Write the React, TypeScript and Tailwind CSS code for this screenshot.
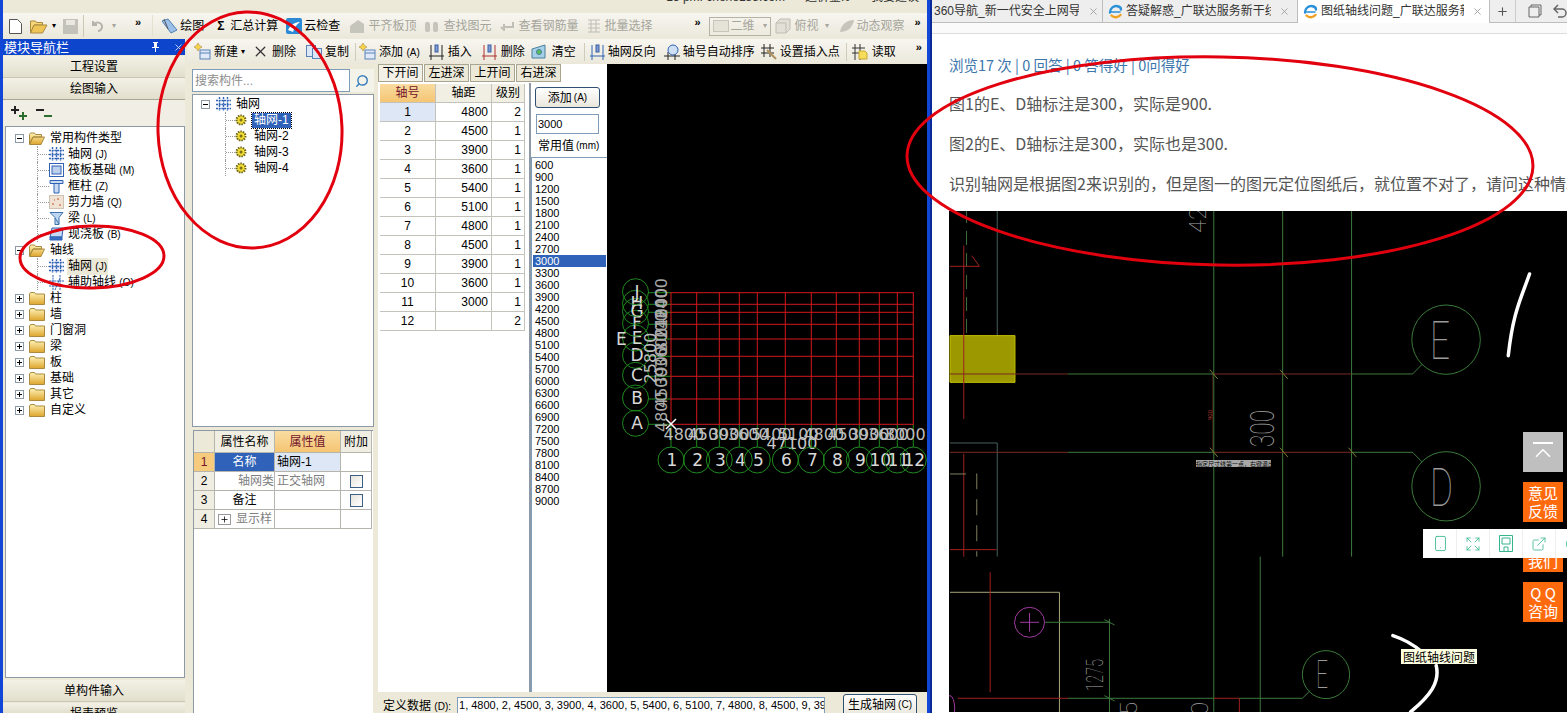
import React from "react";
import { Smartphone, Expand, ExternalLink, CircleDot, Plus, X, Search, ChevronUp } from "lucide-react";

const GridIcon = () => (
  <svg width="15" height="14" viewBox="0 0 15 14" className="shrink-0" stroke="#2f62b5" fill="none">
    <path d="M3.5 0v14M7.5 0v14M11.5 0v14M0 3.5h15M0 7.5h15M0 11.5h15" strokeWidth="1.4" strokeDasharray="2 .7" />
  </svg>
);

const PlateIcon = () => (
  <svg width="15" height="14" viewBox="0 0 15 14" className="shrink-0" fill="none" stroke="#2f62b5">
    <rect x=".5" y=".5" width="14" height="13" strokeWidth="1" />
    <rect x="3" y="3" width="9" height="8" fill="#bcd0ee" />
  </svg>
);

const ColumnIcon = () => (
  <svg width="15" height="15" viewBox="0 0 15 15" className="shrink-0" fill="#c9d9f2" stroke="#2f62b5">
    <path d="M1 1.5h13v3H1zM5 4.5h5V14H5z" />
  </svg>
);

const WallIcon = () => (
  <svg width="15" height="14" viewBox="0 0 15 14" className="shrink-0">
    <rect x=".5" y=".5" width="14" height="13" fill="#f1e3d3" stroke="#a8957f" strokeDasharray="1 1" />
    <path d="M3 9h2M8 4h2M10 10h2M5 5h1" stroke="#c0502a" />
  </svg>
);

const BeamIcon = () => (
  <svg width="15" height="15" viewBox="0 0 15 15" className="shrink-0" fill="#bcd7ef" stroke="#3d72ad">
    <path d="M1 1.5h13l-4 5v7H6v-7z" />
    <path d="M6 7l4 6" />
  </svg>
);

const SlabIcon = () => (
  <svg width="15" height="14" viewBox="0 0 15 14" className="shrink-0" fill="#c6d8f3" stroke="#2f62b5">
    <path d="M3 1h11l-1 9H1z" />
    <path d="M1 10h12v3H1z" fill="#3b6fc4" />
  </svg>
);

const AuxIcon = () => (
  <svg width="15" height="15" viewBox="0 0 15 15" className="shrink-0" stroke="#2f62b5" fill="none">
    <path d="M4 0v15M11 0v15M0 6h15M0 11h15M6 15L11 3" strokeDasharray="2 .6" />
  </svg>
);

const FolderIcon = ({ open }: { open?: boolean }) => (
  <svg width="16" height="13" viewBox="0 0 16 13" className="shrink-0">
    <defs>
      <linearGradient id="fold" x1="0" y1="0" x2="0" y2="1">
        <stop offset="0" stopColor="#fff3b8" />
        <stop offset="1" stopColor="#dda52c" />
      </linearGradient>
    </defs>
    {open ? (
      <path d="M.5 12V2.5l1-1.5h4l1 1.500h6V5H4L.5 12zm0 .5h11.500L15.500 5H4z" fill="url(#fold)" stroke="#a98a3e" />
    ) : (
      <path d="M.5 12.500V2l1-1.500h4l1 1.500h9v10.500z" fill="url(#fold)" stroke="#a98a3e" />
    )}
  </svg>
);

const Expander = ({ open }: { open?: boolean }) => (
  <span className="w-[9px] h-[9px] border border-[#8c9aa8] bg-white flex items-center justify-center shrink-0 relative">
    <span className="w-[5px] h-px bg-black" />
    {!open && <span className="absolute w-px h-[5px] bg-black" />}
  </span>
);

const NewIcon = () => (
  <svg width="17" height="17" viewBox="0 0 17 17" className="shrink-0">
    <rect x="6" y="7" width="10" height="9" fill="#dfe9f8" stroke="#5b82b8" />
    <path d="M6 10h10" stroke="#5b82b8" />
    <path d="M4 0l1.500 2.500L8 4 5.500 5.500 4 8 2.500 5.500 0 4l2.500-1.500z" fill="#f5d44b" stroke="#a98a3e" strokeWidth=".6" />
  </svg>
);

const AxisIcon = ({ color = "#222" }: { color?: string }) => (
  <svg width="15" height="16" viewBox="0 0 15 16" className="shrink-0" stroke={color} fill="none">
    <path d="M2 1v15M13 1v15M0 12h15" />
    <rect x="6" y="1" width="3" height="7" fill="#7e9bd3" stroke="#3b5ea5" />
  </svg>
);

// the blue and orange swirl on the browser tabs
const TabLogo = () => (
  <svg width="15" height="15" viewBox="0 0 15 15" className="shrink-0" fill="none" strokeWidth="2.400" strokeLinecap="round">
    <path d="M2 8.500C2 4 6 1.500 9.500 2.200c2 .4 3.500 1.800 3.500 3.300" stroke="#2a90d8" />
    <path d="M3 8h9" stroke="#2a90d8" strokeWidth="1.500" />
    <path d="M3.500 11.500c2.500 2.500 6.500 2.200 9-.5" stroke="#f0a020" />
  </svg>
);

const Dim = ({ children }: { children: React.ReactNode }) => <span className="text-[#a6a59c]">{children}</span>;

const Chevrons = ({ className }: { className: string }) => (
  <span className={"text-[11px] font-bold leading-none -mt-2 " + className}>»</span>
);

const LeafRow = ({ icon, label, hot, active }: { icon: React.ReactNode; label: string; hot: string; active?: boolean }) => (
  <div className="h-4 flex items-center">
    <span className="w-3 h-full border-l border-dotted border-[#9a9a9a] flex items-center">
      <span className="w-full border-t border-dotted border-[#9a9a9a]" />
    </span>
    {icon}
    <span className={"ml-[3px] px-px leading-4 " + (active ? "bg-[#ece9d8]" : "")}>
      {label} <span className="text-[10px]">{hot}</span>
    </span>
  </div>
);

const FolderRow = ({ label, open }: { label: string; open?: boolean }) => (
  <div className="h-4 flex items-center pl-[9px]">
    <Expander open={open} />
    <span className="w-[5px]" />
    <FolderIcon open={open} />
    <span className="ml-[5px]">{label}</span>
  </div>
);

const ModuleNav = () => (
  <div className="w-[184px] shrink-0 flex flex-col pr-[2px]">
    <div className="h-[16px] bg-[#0e45cd] text-white flex items-center leading-none pl-px">
      <span className="text-[13px]">模块导航栏</span>
      <svg width="9" height="10" viewBox="0 0 9 10" className="ml-auto mr-[13px]" fill="#fff">
        <path d="M2 0h5v1H6v4h2v1H5v4H4V6H1V5h2V1H2z" />
      </svg>
      <X size={11} className="mr-[1px] text-[#c8d6f5]" />
    </div>
    <div className="h-[22px] mt-px bg-gradient-to-b from-[#f3f1e6] to-[#e2dfcd] border-b border-[#c9c6b4] flex items-center justify-center text-[12px]">工程设置</div>
    <div className="h-[22px] bg-gradient-to-b from-[#f3f1e6] to-[#e2dfcd] border-b border-[#a9a695] flex items-center justify-center text-[12px]">绘图输入</div>
    <div className="h-[26px] pl-[7px] flex items-center gap-[9px] bg-[#f1efe5]">
      <svg width="17" height="14" viewBox="0 0 17 14" stroke="#2c6c2c" fill="none" strokeWidth="2">
        <path d="M1 4h8M5 0v8" stroke="#222" />
        <path d="M9 10h8M13 6v8" />
      </svg>
      <svg width="17" height="12" viewBox="0 0 17 12" fill="none" strokeWidth="2">
        <path d="M0 3h8" stroke="#222" />
        <path d="M8 9h8" stroke="#2c6c2c" />
      </svg>
    </div>
    <div className="flex-1 ml-[2px] bg-white border border-[#8d9aa6] pt-[3px] text-[12px] text-black overflow-hidden">
      <FolderRow label="常用构件类型" open />
      <div className="ml-[31px]">
        <LeafRow icon={<GridIcon />} label="轴网" hot="(J)" />
        <LeafRow icon={<PlateIcon />} label="筏板基础" hot="(M)" />
        <LeafRow icon={<ColumnIcon />} label="框柱" hot="(Z)" />
        <LeafRow icon={<WallIcon />} label="剪力墙" hot="(Q)" />
        <LeafRow icon={<BeamIcon />} label="梁" hot="(L)" />
        <LeafRow icon={<SlabIcon />} label="现浇板" hot="(B)" />
      </div>
      <FolderRow label="轴线" open />
      <div className="ml-[31px]">
        <LeafRow icon={<GridIcon />} label="轴网" hot="(J)" active />
        <LeafRow icon={<AuxIcon />} label="辅助轴线" hot="(O)" />
      </div>
      {["柱", "墙", "门窗洞", "梁", "板", "基础", "其它", "自定义"].map((f) => (
        <FolderRow key={f} label={f} />
      ))}
    </div>
    <div className="h-[22px] mt-[2px] bg-gradient-to-b from-[#f3f1e6] to-[#e2dfcd] border-b border-[#c9c6b4] flex items-center justify-center text-[12px]">单构件输入</div>
    <div className="h-[10px] mt-[1px] bg-gradient-to-b from-[#f3f1e6] to-[#e2dfcd] flex justify-center text-[12px] leading-[22px]">报表预览</div>
  </div>
);

const Dot = () => (
  <svg width="12" height="12" viewBox="0 0 12 12" className="shrink-0">
    <circle cx="6" cy="6" r="4.500" fill="#f1dd33" stroke="#6f6420" strokeDasharray="1.500 1" strokeWidth="2" />
    <circle cx="6" cy="6" r="1.500" fill="#7a6d1f" />
  </svg>
);

const ComponentList = () => (
  <div className="h-[333px] mt-[2px] bg-white border border-[#8d9aa6] pt-[1px] pl-2 text-[12px] overflow-hidden">
    <div className="h-4 flex items-center">
      <Expander open />
      <span className="w-[6px]" />
      <GridIcon />
      <span className="ml-[5px]">轴网</span>
    </div>
    <div className="ml-[24px]">
      {["轴网-1", "轴网-2", "轴网-3", "轴网-4"].map((n, i) => (
        <div key={n} className="h-4 flex items-center">
          <span className="w-[10px] h-full border-l border-dotted border-[#9a9a9a] flex items-center">
            <span className="w-full border-t border-dotted border-[#9a9a9a]" />
          </span>
          <Dot />
          <span className={"ml-[5px] px-[2px] leading-[15px] " + (i === 0 ? "bg-[#2f62b8] text-white outline-1 outline-dotted outline-black" : "")}>{n}</span>
        </div>
      ))}
    </div>
  </div>
);

const PropertyTable = () => {
  const cell = "border-r border-b border-[#b5b5ae] flex items-center text-[12px]";
  const rows = [
    { n: "1", name: "名称", value: "轴网-1", check: false },
    { n: "2", name: "轴网类", value: "正交轴网", check: true },
    { n: "3", name: "备注", value: "", check: true },
    { n: "4", name: "显示样", value: "", check: false },
  ];
  return (
    <div className="ml-[1px] mt-[3px] flex-1 bg-white border-t border-l border-[#8d9aa6] w-[180px] grid grid-cols-[21px_60px_66px_31px] grid-rows-[22px_19px_19px_19px_19px] content-start">
      <div className={cell + " bg-[#ece9d8]"} />
      <div className={cell + " bg-[#f0eee2] justify-center"}>属性名称</div>
      <div className={cell + " bg-gradient-to-b from-[#f9dca0] to-[#f5c573] justify-center text-[#72122a]"}>属性值</div>
      <div className={cell + " bg-[#f0eee2] justify-center"}>附加</div>
      {rows.map((r, i) => (
        <React.Fragment key={r.n}>
          <div className={cell + " justify-center text-[11px] " + (i === 0 ? "bg-[#f7cb7e] text-[#72122a]" : "bg-[#f0eee2]")}>{r.n}</div>
          {i === 3 ? (
            <div className={cell + " text-[#808080] pl-[3px]"}>
              <span className="w-[13px] h-[11px] border border-[#999] flex items-center justify-center text-black mr-[5px]">
                <Plus size={9} />
              </span>
              {r.name}
            </div>
          ) : (
            <div className={cell + " justify-center " + (i === 0 ? "bg-[#2f62b8] text-white" : i === 1 ? "text-[#808080] justify-end" : "")}>{r.name}</div>
          )}
          <div className={cell + " pl-[2px] " + (i === 0 ? "bg-[#dde7f5]" : "") + (i === 1 ? " text-[#808080]" : "")}>{r.value}</div>
          <div className={cell + " justify-center"}>
            {r.check && <span className="w-[13px] h-[13px] border border-[#3d5f86] bg-gradient-to-br from-[#e6e4dc] to-white" />}
          </div>
        </React.Fragment>
      ))}
    </div>
  );
};

const gridRows = [
  [1, 4800, 2], [2, 4500, 1], [3, 3900, 1], [4, 3600, 1], [5, 5400, 1], [6, 5100, 1],
  [7, 4800, 1], [8, 4500, 1], [9, 3900, 1], [10, 3600, 1], [11, 3000, 1], [12, "", 2],
];

const AxisTable = () => {
  const c = "border-r border-b border-[#c3c3bc] flex items-center text-[12px]";
  return (
    <div className="w-[153px] shrink-0 bg-white border-r-2 border-[#8d9aa6] pl-[2px] pt-[1px]">
      <div className="w-[145px] grid grid-cols-[56px_56px_33px] grid-rows-[19px] auto-rows-[19px]">
        <div className={c + " justify-center bg-gradient-to-b from-[#f9dca0] to-[#f5c573] text-[#72122a]"}>轴号</div>
        <div className={c + " justify-center bg-[#f1efe4]"}>轴距</div>
        <div className={c + " justify-center bg-[#f1efe4]"}>级别</div>
        {gridRows.map((r, i) => (
          <React.Fragment key={r[0]}>
            <div className={c + " justify-center text-[11px] " + (i === 0 ? "bg-[#dde7f5]" : "")}>{r[0]}</div>
            <div className={c + " justify-end pr-[3px] text-[11px]"}>{r[1]}</div>
            <div className={c + " justify-end pr-[3px] text-[11px]"}>{r[2]}</div>
          </React.Fragment>
        ))}
      </div>
    </div>
  );
};

const commonValues = [600, 900, 1200, 1500, 1800, 2100, 2400, 2700, 3000, 3300, 3600, 3900, 4200, 4500, 4800, 5100, 5400, 5700, 6000, 6300, 6600, 6900, 7200, 7500, 7800, 8100, 8400, 8700, 9000];

const ValuePicker = () => (
  <div className="w-[76px] shrink-0 flex flex-col bg-white">
    <div className="pl-[4px] pt-[4px]">
      <div className="w-[65px] h-[21px] border border-[#2f4f73] rounded-[3px] bg-gradient-to-b from-white to-[#e9e7dc] flex items-center justify-center text-[12px]">添加 <span className="ml-[2px] text-[10px]">(A)</span></div>
      <div className="w-[63px] h-[20px] mt-[6px] ml-px border border-[#7f9db9] flex items-center pl-px text-[11px]">3000</div>
    </div>
    <div className="h-[23px] flex items-center pl-[7px] text-[12px]">常用值 <span className="ml-[2px] text-[10px]">(mm)</span></div>
    <div className="flex-1 border-l border-t border-[#7f9db9] pt-[1px] text-[11px] leading-[12px] overflow-hidden">
      {commonValues.map((v) => (
        <div key={v} className={"pl-[2px] ml-[1px] mr-px " + (v === 3000 ? "bg-[#2f62b8] text-white" : "")}>{v}</div>
      ))}
    </div>
  </div>
);

const xs = [671, 696.7, 719.3, 739.3, 757.3, 785.3, 811.3, 836.3, 859.3, 879.3, 897.3, 913.3];
const ys = [424.3, 399, 376.3, 356.3, 339, 324.3, 312.3, 304.3, 292.7];
const bays = [4800, 4500, 3900, 3600, 5400, 5100, 4800, 4500, 3900, 3600, 3000];
const rowLabels = ["A", "B", "C", "D", "E", "F", "G", "H", "J"];
const sideDims = [4800, 4500, 3900, 3600, 3000, 2400, 1800, 2400];

const GridCanvas = () => (
  <div className="flex-1 bg-black">
    <svg width="320" height="628" viewBox="607 64 320 628" className="block" fontFamily="DejaVu Sans, sans-serif">
      {xs.map((x) => <line key={x} x1={x} x2={x} y1="424" y2="447" stroke="#1f8a1f" />)}
      {ys.map((y) => <line key={y} x1="648" x2="671" y1={y} y2={y} stroke="#1f8a1f" />)}
      {xs.map((x) => <line key={x} x1={x} x2={x} y1="292.500" y2="424.500" stroke="#d4171d" />)}
      {ys.map((y) => <line key={y} x1="671" x2="913.500" y1={y} y2={y} stroke="#d4171d" />)}
      <path d="M666 419l10 10M676 419l-10 10" stroke="#fff" strokeWidth="1.500" />
      {bays.map((b, i) => (
        <text key={i} x={(xs[i] + xs[i + 1]) / 2} y="440" fontSize="16" fill="#bdbdbd" textAnchor="middle">{b}</text>
      ))}
      <text x="792" y="449" fontSize="16" fill="#c8c8c8" textAnchor="middle">47100</text>
      {xs.map((x, i) => (
        <g key={x}>
          <circle cx={x} cy="460" r="13" fill="none" stroke="#1f8a1f" />
          <text x={x + 1} y="466" fontSize="17" fill="#d8d8d8" textAnchor="middle">{i + 1}</text>
        </g>
      ))}
      {rowLabels.map((l, i) => (
        <g key={l}>
          <circle cx="635.500" cy={ys[i] - 1} r="13" fill="none" stroke="#1f8a1f" />
          <text x="637" y={ys[i] + 5} fontSize="17" fill="#d8d8d8" textAnchor="middle">{l}</text>
        </g>
      ))}
      {sideDims.map((d, i) => (
        <text key={i} transform={`translate(667 ${(ys[i] + ys[i + 1]) / 2}) rotate(-90)`} fontSize="16" fill="#a8a8a8" textAnchor="middle">{d}</text>
      ))}
      <text transform="translate(656 358) rotate(-90)" fontSize="16" fill="#bdbdbd" textAnchor="middle">25800</text>
      <text x="616" y="345" fontSize="17" fill="#d8d8d8">E</text>
    </svg>
  </div>
);

const tabClass = "w-[45px] h-[18px] flex items-center justify-center border border-[#a7a48f] bg-[#ece9d8] text-[12px]";

const Workspace = () => (
  <div className="flex-1 min-w-0 flex flex-col pl-[2px]">
    <div className="flex-1 min-h-0 flex">
      <div className="w-[229px] shrink-0 flex flex-col">
        <div className="h-[19px] flex bg-white gap-px">
          <div className={tabClass + " border-[#3d6fb0] bg-[#f3f1e7]"}>下开间</div>
          <div className={tabClass}>左进深</div>
          <div className={tabClass}>上开间</div>
          <div className={tabClass}>右进深</div>
        </div>
        <div className="flex-1 min-h-0 flex">
          <AxisTable />
          <ValuePicker />
        </div>
      </div>
      <GridCanvas />
    </div>
    <div className="h-[21px] flex items-center text-[12px] pl-[5px]">
      <span className="mt-[6px]">定义数据 <span className="text-[10px]">(D):</span></span>
      <div className="ml-[6px] mt-[6px] w-[368px] h-[17px] bg-white border border-[#7f9db9] pl-px text-[11px] leading-[15px] whitespace-nowrap overflow-hidden">
        1, 4800, 2, 4500, 3, 3900, 4, 3600, 5, 5400, 6, 5100, 7, 4800, 8, 4500, 9, 3900
      </div>
      <div className="ml-[18px] mt-[4px] w-[74px] h-[22px] border border-[#2f4f73] rounded-[3px] bg-gradient-to-b from-white to-[#e9e7dc] flex items-center justify-center">生成轴网 <span className="ml-[2px] text-[10px]">(C)</span></div>
    </div>
  </div>
);

const ComponentToolbar = () => (
  <div className="h-[25px] flex items-center text-[12px] bg-gradient-to-b from-[#f7f6f0] to-[#ebe8da] pl-[7px] whitespace-nowrap">
    <NewIcon /><span className="ml-[3px]">新建</span>
    <span className="ml-[3px] text-[8px]">▾</span>
    <X size={17} className="ml-[7px] text-[#333]" strokeWidth={1.800} /><span className="ml-[3px]">删除</span>
    <svg width="16" height="14" viewBox="0 0 16 14" className="ml-[10px]" fill="#dbe6f7" stroke="#5b82b8"><rect x=".5" y=".5" width="9" height="11" /><rect x="6.500" y="3.500" width="9" height="10" /></svg>
    <span className="ml-[3px]">复制</span>
    <span className="ml-[6px] mr-[3px] w-px h-[18px] bg-[#cfccbb]" />
    <NewIcon /><span className="ml-[3px]">添加 <span className="text-[10px]">(A)</span></span>
    <span className="ml-[9px]"><AxisIcon /></span><span className="ml-[4px]">插入</span>
    <span className="ml-[10px]"><AxisIcon color="#b03030" /></span><span className="ml-[4px]">删除</span>
    <svg width="15" height="15" viewBox="0 0 15 15" className="ml-[6px]" fill="#a6d0e8" stroke="#4a7f9c"><path d="M1 14V5l13-4v13z" /><circle cx="8" cy="8" r="2.500" fill="#5bbf5b" /></svg>
    <span className="ml-[6px]">清空</span>
    <span className="ml-[8px] mr-[5px] w-px h-[18px] bg-[#cfccbb]" />
    <AxisIcon color="#2f62b5" /><span className="ml-[3px]">轴网反向</span>
    <svg width="16" height="16" viewBox="0 0 16 16" className="ml-[8px]" fill="none" stroke="#2f62b5"><path d="M0 12h16M4 8v8M11 8v8" stroke="#222" /><circle cx="9" cy="6" r="5" fill="#cfe0f5" /></svg>
    <span className="ml-[3px]">轴号自动排序</span>
    <svg width="16" height="16" viewBox="0 0 16 16" className="ml-[6px]" stroke="#222" fill="none"><path d="M3 0v13M9 0v13M0 4h13M0 9h13" /><path d="M6 6l9 9" stroke="#b0905c" strokeWidth="2" /></svg>
    <span className="ml-[3px]">设置插入点</span>
    <span className="ml-[6px] mr-[5px] w-px h-[18px] bg-[#cfccbb]" />
    <svg width="16" height="16" viewBox="0 0 16 16" stroke="#333" fill="none"><path d="M3 0v16M8 0v16M0 4h13M0 9h13" /><path d="M7 7h6l2 2v6H7z" fill="#f5dc5a" stroke="#c9a92f" /></svg>
    <span className="ml-[4px]">读取</span>
    <Chevrons className="ml-[20px]" />
  </div>
);

const MainToolbar = () => (
  <div className="h-[26px] flex items-center text-[12px] whitespace-nowrap bg-gradient-to-b from-[#f7f6f0] to-[#ebe8da] pl-[6px] shrink-0">
    <svg width="13" height="15" viewBox="0 0 13 15" fill="#fff" stroke="#555"><path d="M.5.5h8l4 4v10H.5z" /></svg>
    <svg width="18" height="15" viewBox="0 0 18 15" className="ml-[8px]"><path d="M.5 14V2h5l1 1.500h6V6H4z" fill="#f5d67a" stroke="#a98a3e" /><path d="M.5 14h12L17 6H4z" fill="#eec555" stroke="#a98a3e" /></svg>
    <span className="ml-[4px] text-[8px]">▾</span>
    <svg width="15" height="15" viewBox="0 0 15 15" className="ml-[7px]" fill="#c2c2ba"><path d="M0 0h15v15H0z" /><path d="M3 1h9v5H3z" fill="#e9e8e0" /></svg>
    <span className="ml-[5px] w-px h-[22px] bg-[#cbc8b8]" />
    <Dim><svg width="13" height="12" viewBox="0 0 13 12" className="ml-[6px]" fill="none" stroke="#b5b4ab" strokeWidth="2"><path d="M3 1v4h4M3 5c3-4 9-3 9 2 0 2-2 4-4 4" /></svg></Dim>
    <span className="ml-[9px] text-[8px] text-[#a6a59c]">▾</span>
    <Chevrons className="ml-[19px]" />
    <span className="ml-[11px] w-px h-[22px] bg-[#e4e1d1]" />
    <svg width="17" height="16" viewBox="0 0 17 16" className="ml-[8px]" fill="#9cc0e8" stroke="#4f7fb3"><path d="M1 3l6-2 9 11-6 3z" /><path d="M3 1l4 10" stroke="#555" /></svg>
    <span className="ml-[2px]">绘图</span>
    <span className="ml-[13px] font-bold">Σ</span>
    <span className="ml-[6px]">汇总计算</span>
    <svg width="16" height="16" viewBox="0 0 16 16" className="ml-[8px]"><rect width="16" height="16" rx="2" fill="#2b8ad6" /><path d="M2 12c3-6 8-8 12-8-4 3-6 6-7 10z" fill="#fff" /></svg>
    <span className="ml-[2px]">云检查</span>
    <Dim><svg width="15" height="15" viewBox="0 0 15 15" className="ml-[10px]" fill="#c6c5bc"><path d="M0 14V7l8-6 6 4v9z" /></svg></Dim>
    <span className="ml-[3px]"><Dim>平齐板顶</Dim></span>
    <Dim><svg width="15" height="13" viewBox="0 0 15 13" className="ml-[8px]" fill="#c6c5bc"><rect x="1" y="2" width="5" height="10" rx="2" /><rect x="9" y="2" width="5" height="10" rx="2" /></svg></Dim>
    <span className="ml-[4px]"><Dim>查找图元</Dim></span>
    <Dim><svg width="14" height="10" viewBox="0 0 14 10" className="ml-[9px]" fill="none" stroke="#c0bfb6" strokeWidth="2"><path d="M1 6l3 3V3M13 1v5H5" /></svg></Dim>
    <span className="ml-[4px]"><Dim>查看钢筋量</Dim></span>
    <Dim><svg width="14" height="15" viewBox="0 0 14 15" className="ml-[9px]" fill="none" stroke="#bebdb4"><path d="M1 1h12M1 5h12M1 9h12M1 13h12M4 1v12M9 1v12" /></svg></Dim>
    <span className="ml-[3px]"><Dim>批量选择</Dim></span>
    <Chevrons className="ml-[42px]" />
    <div className="ml-[8px] w-[62px] h-[19px] border border-[#b5b3a5] flex items-center pl-[3px]">
      <span className="w-[16px] h-[12px] bg-[#e5e3d8] border border-[#c6c5bc]" />
      <span className="ml-[2px] text-[#a6a59c]">二维</span>
      <span className="ml-auto mr-[3px] text-[8px] text-[#a6a59c]">▾</span>
    </div>
    <Dim><svg width="16" height="16" viewBox="0 0 16 16" className="ml-[4px]" fill="#e2e0d6" stroke="#bebdb4"><path d="M1 5h10v10H1zM1 5l4-4h10v10l-4 4" /></svg></Dim>
    <span className="ml-[4px]"><Dim>俯视</Dim></span>
    <span className="ml-[6px] text-[8px] text-[#a6a59c]">▾</span>
    <Dim><svg width="16" height="14" viewBox="0 0 16 14" className="ml-[10px]" fill="#c6c5bc"><path d="M1 13c1-7 6-12 14-12-1 7-6 12-14 12z" /></svg></Dim>
    <span className="ml-[2px]"><Dim>动态观察</Dim></span>
    <Chevrons className="ml-[10px]" />
  </div>
);

const Cad = () => (
  <svg width="618" height="501" viewBox="-1 2 618 501" className="block bg-black" fontFamily="Roboto, sans-serif" fill="none">
    <g transform="scale(.3937 .3333)">
      <path d="M670 0V1509" stroke="#3d7a3d" vectorEffect="non-scaling-stroke" />
      <path d="M845 0V1043M1020 0V1043M788 1043V1509" stroke="#3d7a3d" vectorEffect="non-scaling-stroke" />
      <path d="M120 0V380M0 702H120V1043" stroke="#46605f" vectorEffect="non-scaling-stroke" />
      <path d="M42 0V380" stroke="#3d6f3d" strokeDasharray="14 8" vectorEffect="non-scaling-stroke" />
      <rect x="0" y="380" width="165" height="140" fill="#9c9800" stroke="#c8c400" vectorEffect="non-scaling-stroke" />
      <path d="M35 110V630M35 735V1043M0 172H75L55 140M0 1022H118" stroke="#a0201f" vectorEffect="non-scaling-stroke" />
      <path d="M0 495H300M670 495H1020M0 730H300M670 730H1020" stroke="#7a2a22" vectorEffect="non-scaling-stroke" />
      <path d="M667 495V730" stroke="#6e231d" strokeWidth=".6" vectorEffect="non-scaling-stroke" />
      <path d="M300 495H670M1020 495H1175L1200 465M300 730H670M1020 730H1175L1200 760" stroke="#3d7a3d" vectorEffect="non-scaling-stroke" />
      <path d="M0 795H68V1043" stroke="#7f7f5f" strokeDasharray="16 10" vectorEffect="non-scaling-stroke" />
      <path d="M660 482L680 510M838 482L858 510M660 716L680 744M838 716L858 744M1012 716L1032 744" stroke="#7d7d2a" vectorEffect="non-scaling-stroke" />
      <ellipse cx="1260" cy="392" rx="87" ry="104" stroke="#3a7a3a" vectorEffect="non-scaling-stroke" />
      <ellipse cx="1260" cy="832" rx="87" ry="104" stroke="#3a7a3a" vectorEffect="non-scaling-stroke" />
      <path d="M0 1150H278V1509" stroke="#a8a878" vectorEffect="non-scaling-stroke" />
      <path d="M102 1090V1450M20 1468H300M670 1468H735V1509" stroke="#a0201f" vectorEffect="non-scaling-stroke" />
      <path d="M300 1468H670M735 1468H895L915 1445M240 1240H405M405 1230V1509M392 1232L418 1248M392 1460L418 1476" stroke="#3d7a3d" vectorEffect="non-scaling-stroke" />
      <ellipse cx="202" cy="1240" rx="38" ry="45" stroke="#a03aa0" vectorEffect="non-scaling-stroke" />
      <path d="M178 1240H226M202 1212V1268" stroke="#a03aa0" vectorEffect="non-scaling-stroke" />
      <ellipse cx="955" cy="1397" rx="60" ry="72" stroke="#3a7a3a" vectorEffect="non-scaling-stroke" />
      <path d="M1472 195C1450 270 1430 310 1418 440M1125 1280C1150 1290 1170 1300 1200 1330M1235 1370C1245 1420 1220 1460 1170 1509" stroke="#fff" strokeWidth="3.500" strokeLinecap="round" vectorEffect="non-scaling-stroke" />
      <ellipse cx="0" cy="1500" rx="12" ry="40" stroke="#a03aa0" vectorEffect="non-scaling-stroke" />
    </g>
    <text x="480" y="150" fontSize="53" fontWeight="100" fill="#9a9a9a" textLength="20" lengthAdjust="spacingAndGlyphs">E</text>
    <text x="480" y="297" fontSize="54" fontWeight="100" fill="#9a9a9a" textLength="23" lengthAdjust="spacingAndGlyphs">D</text>
    <text transform="translate(324 238) rotate(-90)" fontSize="34" fontWeight="100" fill="#a5a5a5" textLength="37" lengthAdjust="spacingAndGlyphs">300</text>
    <text transform="translate(153 482) rotate(-90)" fontSize="24" fontWeight="100" fill="#a5a5a5" textLength="32" lengthAdjust="spacingAndGlyphs">1275</text>
    <text transform="translate(256 24) rotate(-90)" fontSize="24" fontWeight="100" fill="#a5a5a5">42</text>
    <text transform="translate(187 506) rotate(-90)" fontSize="24" fontWeight="100" fill="#a5a5a5">5</text>
    <text transform="translate(258 506) rotate(-90)" fontSize="24" fontWeight="100" fill="#a5a5a5">0</text>
    <text transform="translate(262 211) rotate(-90)" fontSize="6" fill="#a0352c">900</text>
    <text x="366" y="479" fontSize="38" fontWeight="100" fill="#9a9a9a" textLength="12" lengthAdjust="spacingAndGlyphs">E</text>
  </svg>
);

const Browser = () => (
  <div className="flex-1 min-w-0 flex flex-col bg-white border-l-2 border-[#0a2a9a] relative">
    <div className="h-[23px] shrink-0 flex items-end bg-[#eeeeee] border-b border-[#bdbdbd] text-[12px] text-[#333] whitespace-nowrap">
      <div className="w-[171px] h-full flex items-center overflow-hidden border-r border-[#bdbdbd] pl-[2px]">
        <span className="w-[145px] overflow-hidden">360导航_新一代安全上网导航</span>
        <X size={11} className="ml-[9px] text-[#a0a0a0] shrink-0" />
      </div>
      <div className="w-[195px] h-full flex items-center overflow-hidden border-r border-[#bdbdbd] pl-[5px]">
        <TabLogo />
        <span className="ml-[3px] w-[145px] overflow-hidden">答疑解惑_广联达服务新干线</span>
        <X size={11} className="ml-[8px] text-[#a0a0a0] shrink-0" />
      </div>
      <div className="w-[192px] h-[24px] -mb-px flex items-center overflow-hidden bg-white border-r border-[#bdbdbd] pl-[5px]">
        <TabLogo />
        <span className="ml-[3px] w-[143px] overflow-hidden">图纸轴线问题_广联达服务新干线</span>
        <X size={11} className="ml-[8px] text-[#a0a0a0] shrink-0" />
      </div>
      <div className="h-full flex items-center">
        <Plus size={13} className="ml-[6px] text-[#555]" />
        <span className="ml-[6px] w-px h-full bg-[#cccccc]" />
        <svg width="14" height="14" viewBox="0 0 14 14" className="ml-[12px]" fill="none" stroke="#666"><path d="M3 3V1h10v10h-2M1 3h10v10H1z" /></svg>
        <svg width="14" height="14" viewBox="0 0 14 14" className="ml-[11px]" fill="none" stroke="#666" strokeWidth="1.500"><path d="M5 1L1 5l4 4M1 5h8a4 4 0 010 8H5" /></svg>
      </div>
    </div>
    <div className="h-[11px] shrink-0 bg-[#fafafa] border-b border-[#dddddd]" />
    <div className="flex-1 min-h-0 pl-[17px] pt-[21px] font-['Noto_Sans_CJK_SC',sans-serif] whitespace-nowrap overflow-hidden">
      <p className="text-[14.500px] leading-5 text-[#3b76ad]">浏览17 次 | 0 回答 | 0 答得好 | 0问得好</p>
      <p className="mt-[17px] text-[16px] leading-[22px] text-[#555]">图1的E、D轴标注是300，实际是900.</p>
      <p className="mt-[18px] text-[16px] leading-[22px] text-[#555]">图2的E、D轴标注是300，实际也是300.</p>
      <p className="mt-[18px] text-[16px] leading-[22px] text-[#555]">识别轴网是根据图2来识别的，但是图一的图元定位图纸后，就位置不对了，请问这种情况怎么处理</p>
      <div className="mt-[17px]">
        <Cad />
      </div>
    </div>
  </div>
);

const SaveMark = () => (
  <svg width="14" height="17" viewBox="0 0 14 17" fill="none" stroke="currentColor" strokeWidth="1">
    <path d="M.5.500h13v16H.5z" />
    <path d="M3 3h8v6H3zM5 16v-4h4v4" />
  </svg>
);

const FloatRail = () => (
  <>
    <div className="absolute left-[1523px] top-[432px] w-[40px] flex flex-col gap-[10px] font-['Noto_Sans_CJK_SC',sans-serif] text-[15px] leading-[18px] text-white text-center">
      <div className="h-[40px] bg-[#bfbfbf] flex flex-col items-center justify-center">
        <span className="w-[20px] h-[2px] bg-white" />
        <ChevronUp size={26} strokeWidth={1.500} className="-my-[4px]" />
      </div>
      <div className="h-[40px] bg-[#ff6a0d] flex items-center justify-center">意见<br />反馈</div>
      <div className="h-[40px] bg-[#ff6a0d] flex items-center justify-center">联系<br />我们</div>
      <div className="h-[40px] bg-[#ff6a0d] flex items-center justify-center">Q Q<br />咨询</div>
    </div>
    <div className="absolute left-[1423px] top-[529px] h-[29px] w-[144px] pl-px bg-white flex items-center overflow-hidden text-[#35b58e]">
      <span className="w-[33px] h-full shrink-0 border-r border-[#efefef] flex items-center justify-center"><Smartphone size={17} strokeWidth={1.200} /></span>
      <span className="w-[33px] h-full shrink-0 border-r border-[#efefef] flex items-center justify-center"><Expand size={16} strokeWidth={1.200} /></span>
      <span className="w-[33px] h-full shrink-0 border-r border-[#efefef] flex items-center justify-center"><SaveMark /></span>
      <span className="w-[33px] h-full shrink-0 border-r border-[#efefef] flex items-center justify-center"><ExternalLink size={16} strokeWidth={1.200} /></span>
      <span className="w-[33px] h-full shrink-0 flex items-center justify-center"><CircleDot size={16} strokeWidth={1.200} /></span>
    </div>
    <div className="absolute left-[1401px] top-[649px] h-[15px] px-[2px] bg-[#ffffe1] text-[12px] leading-[15px] text-black font-['Noto_Sans_CJK_SC',sans-serif]">图纸轴线问题</div>
    <div className="absolute left-[1196px] top-[460px] h-[7px] w-[75px] bg-[#a8a8a8] text-[6px] leading-[7px] text-black font-['Noto_Sans_CJK_SC',sans-serif] whitespace-nowrap overflow-hidden text-center">指定尺寸线第一点，右键退出</div>
  </>
);

// hand drawn red marks on top of the whole screenshot
const Annotations = () => (
  <svg width="1567" height="713" viewBox="0 0 1567 713" className="absolute left-0 top-0 pointer-events-none" fill="none" stroke="#e2000f" strokeWidth="3">
    <ellipse cx="250" cy="130" rx="92" ry="118" transform="rotate(-2 250 130)" />
    <ellipse cx="92" cy="257" rx="72" ry="31" transform="rotate(-1 92 257)" />
    <ellipse cx="1220" cy="161" rx="313" ry="104" transform="rotate(1 1220 161)" />
  </svg>
);

export default function App() {
  return (
    <div className="relative w-[1567px] h-[713px] flex overflow-hidden bg-white text-black font-['Liberation_Sans','Noto_Sans_CJK_SC',sans-serif]">
      <div className="w-[930px] shrink-0 h-full flex flex-col bg-[#ece9d8] border-l-[3px] border-r-[3px] border-[#1146d6]">
        <div className="h-[13px] shrink-0 overflow-hidden relative">
          <div className="absolute right-[8px] -top-[9px] flex items-center gap-[20px] text-[12px] leading-[12px] whitespace-nowrap text-[#333]">
            <span>15 pm. chene188.com</span>
            <span>造价金.0</span>
            <span>我要建议</span>
          </div>
        </div>
        <MainToolbar />
        <div className="flex-1 min-h-0 flex">
          <ModuleNav />
          <div className="flex-1 min-w-0 flex flex-col">
            <ComponentToolbar />
            <div className="flex-1 min-h-0 flex">
              <div className="w-[189px] shrink-0 flex flex-col pl-[5px] pr-[2px]">
                <div className="flex mt-[5px] h-[23px]">
                  <div className="flex-1 bg-white border border-[#7f9db9] flex items-center pl-[2px] text-[12px] text-[#8d8d8d]">搜索构件...</div>
                  <div className="w-[24px] bg-[#f4f3ea] flex items-center justify-center text-[#3a7fbf]">
                    <Search size={14} strokeWidth={2.500} className="-scale-x-100" />
                  </div>
                </div>
                <ComponentList />
                <PropertyTable />
              </div>
              <Workspace />
            </div>
          </div>
        </div>
      </div>
      <Browser />
      <FloatRail />
      <Annotations />
    </div>
  );
}
